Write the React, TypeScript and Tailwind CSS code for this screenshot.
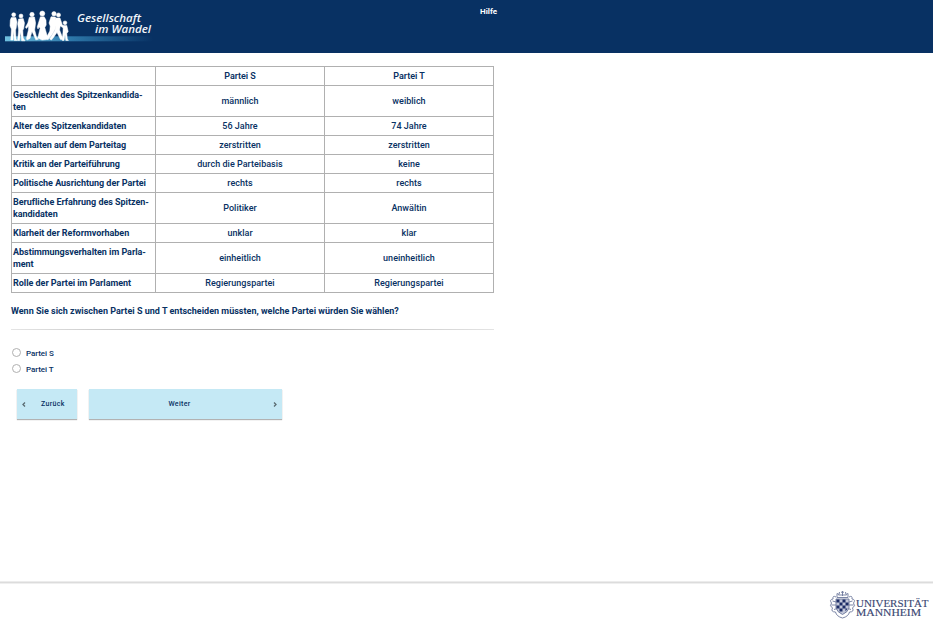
type Row = { label: string[]; s: string; t: string };

const rows: Row[] = [
  { label: ["Geschlecht des Spitzenkandida-", "ten"], s: "männlich", t: "weiblich" },
  { label: ["Alter des Spitzenkandidaten"], s: "56 Jahre", t: "74 Jahre" },
  { label: ["Verhalten auf dem Parteitag"], s: "zerstritten", t: "zerstritten" },
  { label: ["Kritik an der Parteiführung"], s: "durch die Parteibasis", t: "keine" },
  { label: ["Politische Ausrichtung der Partei"], s: "rechts", t: "rechts" },
  { label: ["Berufliche Erfahrung des Spitzen-", "kandidaten"], s: "Politiker", t: "Anwältin" },
  { label: ["Klarheit der Reformvorhaben"], s: "unklar", t: "klar" },
  { label: ["Abstimmungsverhalten im Parla-", "ment"], s: "einheitlich", t: "uneinheitlich" },
  { label: ["Rolle der Partei im Parlament"], s: "Regierungspartei", t: "Regierungspartei" },
];

const cell = "border-r border-b border-[#b0b0b0] p-0";

function PeopleLogo() {
  return (
    <svg width="150" height="38" viewBox="0 0 150 38" className="block">
      <defs>
        <linearGradient id="ground" x1="0" x2="1">
          <stop offset="0" stopColor="#6fc0e0" />
          <stop offset="0.45" stopColor="#2d77a9" />
          <stop offset="1" stopColor="#083163" />
        </linearGradient>
      </defs>
      <rect x="0" y="30.3" width="148" height="5" fill="url(#ground)" />
      <g fill="#fff" stroke="#fff" strokeWidth="0.5" strokeLinejoin="round">
        <circle cx="8.7" cy="8.7" r="2" />
        <path d="M6.3 11.5 L10.8 11.5 L12 16 L11.2 22 L10.6 24 L11 33 L12 34.5 H9.3 L8.6 25 L8 34 H5.8 L6.4 23 L5 20 L5.3 14Z" />
        <circle cx="16" cy="10" r="2" />
        <path d="M13.6 13 L18.2 12.6 L19.5 17 L18.6 23 L17.8 24 L18.2 32 L20 34.8 H16.6 L15.6 26 L14.6 34.5 H12.6 L13.6 24 L12.7 18Z" />
        <circle cx="27" cy="8.5" r="2.2" />
        <path d="M24.3 11.3 L29.5 11 L30.6 17 L29.7 24 L31.5 31 L33.5 33.2 L30.8 33.8 L27 25.5 L25 32.5 L22 34 L21.4 32.5 L23.4 24 L23.6 20 L21.4 22.5 L20.4 21.2 L22.8 17Z" />
        <circle cx="37.3" cy="7.5" r="2.5" />
        <path d="M35.4 10.8 L39.2 10.8 L41 14 L41.2 19 L39.8 21.5 L42.5 31 L41.5 33.5 L37 34 L32.8 32 L35.2 22 L34 21 L33 23 L32.2 21Z" />
        <circle cx="49" cy="7.8" r="2.2" />
        <path d="M46 10.8 L50.6 11 L51.5 18 L49.8 24 L47.2 28.5 L43 33.8 L40.8 32.5 L44.8 25 L45.2 20 L44 17Z" />
        <circle cx="53.5" cy="9" r="2.1" />
        <path d="M50.8 12 L55 12 L57.2 18.5 L59.5 21 L58.5 22 L55.2 20 L54.6 24 L57.3 31 L58.5 33.4 L55.5 33.6 L52 26.5 L48.5 31.5 L46.4 34 L44.6 33 L50 24Z" />
        <circle cx="60" cy="16.8" r="1.9" />
        <path d="M58.2 19.5 L61.8 19.5 L63.2 25.5 L61.8 27.5 L62.3 33 L63.4 34.5 H60.8 L60 29 L59 34.4 H57.2 L58 26Z" />
      </g>
      <g
        fill="#f1f5fa"
        fontFamily="'Open Sans', 'Noto Sans', sans-serif"
        fontStyle="italic"
        fontWeight="600"
        fontSize="10.4"
      >
        <text x="72" y="15.5" textLength="64" lengthAdjust="spacingAndGlyphs">Gesellschaft</text>
        <text x="90" y="27" textLength="56" lengthAdjust="spacingAndGlyphs">im Wandel</text>
      </g>
    </svg>
  );
}

function UniversityLogo() {
  return (
    <svg width="103" height="30" viewBox="0 0 103 30" className="block">
      <g fill="none" stroke="#6d789c" strokeWidth="0.9">
        <path d="M7 7 Q3.5 5 4 9 Q0 9.500 2.500 13 Q0 16 3.500 18 Q1.500 22 6.500 22 Q7.500 26.500 13.500 28 Q19.500 26.500 20.500 22 Q25.500 22 23.500 18 Q27 16 24.500 13 Q27 9.500 23 9 Q23.500 5 20 7" />
        <path d="M3.500 11 L7 12 M2.500 15 L7 15 M5 19.500 L8 18.500 M23.500 11 L20 12 M24.500 15 L20 15 M22 19.500 L19 18.500" />
        <path d="M8 7.500 L8 3.500 L10 4.500 L10.500 2 M13.500 6 V1 M12 2.200 H15 M19 7.500 L19 3.500 L17 4.500 L16.500 2 M8 7.500 H19 M9.500 5 H17.500" />
        <path d="M7 9 H20 V18 Q19 22 13.500 24.500 Q8 22 7 18Z" fill="#c3c8da" />
      </g>
      <path
        d="M7.500 9.500h3v3h-3z M13.500 9.500h3v3h-3z M10.500 12.500h3v3h-3z M16.500 12.500h3v3h-3z M7.500 15.500h3v3h-3z M13.500 15.500h3v3h-3z M10.500 18.500h3v3h-3z M16.500 18.500h2l-2 3z"
        fill="#1c2c66"
      />
      <g fill="#3b4873" fontFamily="'Liberation Serif', serif" fontSize="10.2" stroke="#3b4873" strokeWidth="0.15">
        <text x="27" y="17" textLength="72.500" lengthAdjust="spacingAndGlyphs">UNIVERSITÄT</text>
        <text x="27" y="25.800" textLength="65" lengthAdjust="spacingAndGlyphs">MANNHEIM</text>
      </g>
    </svg>
  );
}

function Chevron({ flip = false }: { flip?: boolean }) {
  return (
    <svg width="4" height="5" viewBox="0 0 4 5" className={flip ? "mt-px rotate-180" : "mt-px"}>
      <path d="M3 0.500 L1 2.500 L3 4.500" fill="none" stroke="#5a6a70" strokeWidth="1.3" />
    </svg>
  );
}

function Choice({ label }: { label: string }) {
  return (
    <label className="flex h-4 items-start">
      <input
        type="radio"
        name="wahl"
        className="mt-[3px] size-[9px] appearance-none rounded-full border border-[#b0b0b0] bg-white"
      />
      <span className="ml-[5px] pt-px text-[8px] font-medium leading-4 tracking-[-0.05px]">{label}</span>
    </label>
  );
}

export default function App() {
  return (
    <div className="flex h-[623px] w-[933px] flex-col overflow-hidden bg-white font-['Roboto',sans-serif] text-[9px] text-[#083163]">
      <header className="flex h-[53px] shrink-0 bg-[#083163]">
        <div className="w-[480px] pt-[6px] pl-[5px]">
          <PeopleLogo />
        </div>
        <a className="pt-[6px] text-[8px] font-bold leading-[11px] text-white">Hilfe</a>
      </header>

      <main className="flex-1 pt-[13px] pl-[11px]">
        <table className="w-[483px] table-fixed border-separate border-spacing-0 border-t border-l border-[#b0b0b0]">
          <colgroup>
            <col className="w-[144px]" />
            <col className="w-[169px]" />
            <col className="w-[169px]" />
          </colgroup>
          <thead>
            <tr className="h-[19px]">
              <th className={cell} />
              <th className={`${cell} font-semibold leading-[12px] tracking-[-0.05px]`}>Partei S</th>
              <th className={`${cell} font-semibold leading-[12px] tracking-[-0.05px]`}>Partei T</th>
            </tr>
          </thead>
          <tbody>
            {rows.map((row) => (
              <tr key={row.label[0]} className={row.label.length > 1 ? "h-[31px]" : "h-[19px]"}>
                <th className={`${cell} pl-px text-left font-bold leading-[12px] tracking-[-0.03px] whitespace-nowrap`}>
                  {row.label.map((line) => (
                    <div key={line}>{line}</div>
                  ))}
                </th>
                <td className={`${cell} text-center font-medium leading-[12px] tracking-[0.02px]`}>{row.s}</td>
                <td className={`${cell} text-center font-medium leading-[12px] tracking-[0.02px]`}>{row.t}</td>
              </tr>
            ))}
          </tbody>
        </table>

        <p className="mt-3 text-[9px] font-bold leading-[12px] tracking-[0.01px]">
          Wenn Sie sich zwischen Partei S und T entscheiden müssten, welche Partei würden Sie wählen?
        </p>
        <div className="mt-3 h-px w-[483px] bg-linear-to-r from-[#e4e4e4] via-[#a8a8a8] to-[#e4e4e4]" />

        <div className="mt-[15px] pl-px">
          <Choice label="Partei S" />
          <Choice label="Partei T" />
        </div>

        <div className="mt-3 ml-[6px] flex gap-3 text-[7px] font-medium">
          <button className="flex h-[30px] w-[60px] items-center bg-[#c5e9f5] pl-[5px] shadow-[0_1px_1px_rgba(0,0,0,0.3)]">
            <Chevron />
            <span className="ml-[15px] tracking-[0.35px]">Zurück</span>
          </button>
          <button className="flex h-[30px] w-[193px] items-center bg-[#c5e9f5] pr-[5px] shadow-[0_1px_1px_rgba(0,0,0,0.3)]">
            <span className="flex-1 pr-[3px] text-center tracking-[0.35px]">Weiter</span>
            <Chevron flip />
          </button>
        </div>
      </main>

      <footer className="flex h-[41px] shrink-0 justify-end pt-[8px] pr-px shadow-[0_-1px_0_#ececec,inset_0_1px_0_#dcdcdc,inset_0_2px_0_#efefef]">
        <UniversityLogo />
      </footer>
    </div>
  );
}
